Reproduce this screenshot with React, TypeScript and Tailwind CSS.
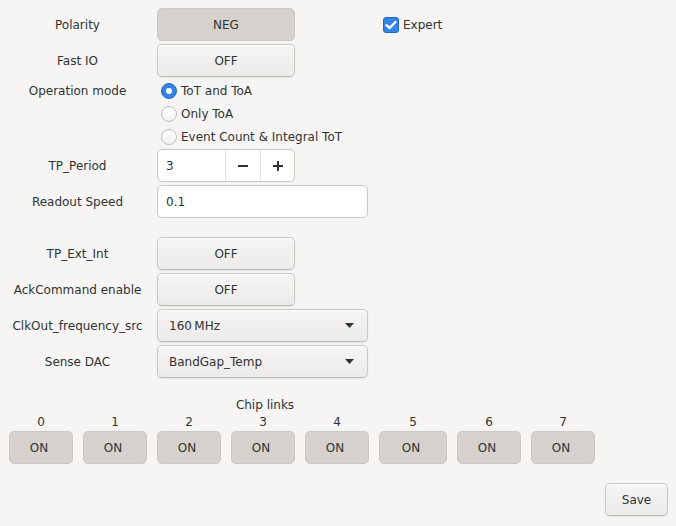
import React from "react";

const btn =
  "h-[33px] rounded-[5px] border border-[#cdc7c2] border-b-[#bfb8b1] bg-gradient-to-b from-[#f6f5f4] to-[#edebe9] shadow-[inset_0_1px_0_white,0_1px_2px_rgba(0,0,0,0.07)] flex items-center justify-center text-[#2e3436]";
const btnChecked =
  "h-[33px] rounded-[5px] border border-[#cdc7c2] bg-[#d6d1cd] flex items-center justify-center text-[#2e3436]";
const entry =
  "h-[33px] rounded-[5px] border border-[#cdc7c2] bg-white flex items-center text-[#2e3436]";

function Label({ children }: { children: React.ReactNode }) {
  return (
    <div className="w-[155px] shrink-0 text-center text-[#2e3436]">{children}</div>
  );
}

function Row({
  label,
  children,
}: {
  label: string;
  children: React.ReactNode;
}) {
  return (
    <div className="flex items-center h-[33px]">
      <Label>{label}</Label>
      <div className="ml-[2px] flex items-center">{children}</div>
    </div>
  );
}

function Radio({ checked, label }: { checked?: boolean; label: string }) {
  return (
    <div className="flex items-center h-[22px] pl-[4px]">
      {checked ? (
        <div className="w-[16px] h-[16px] rounded-full bg-[#3584e4] border border-[#1b6acb] flex items-center justify-center">
          <div className="w-[6px] h-[6px] rounded-full bg-white" />
        </div>
      ) : (
        <div className="w-[16px] h-[16px] rounded-full border border-[#c4bdb7] bg-gradient-to-b from-white to-[#f3f2f1]" />
      )}
      <span className="ml-[4px] text-[#2e3436]">{label}</span>
    </div>
  );
}

function Arrow() {
  return (
    <svg width="9" height="5" viewBox="0 0 9 5">
      <path d="M0 0 L9 0 L4.5 5 Z" fill="#2e3436" />
    </svg>
  );
}

export default function App() {
  const widths = [64, 64, 64, 64, 64, 68, 64, 64];
  return (
    <div
      className="w-[676px] h-[526px] bg-[#f6f5f4] text-[12px] leading-[14px] relative overflow-hidden"
      style={{ fontFamily: '"DejaVu Sans", sans-serif' }}
    >
      <div className="pt-[8px] flex flex-col">
        <div className="flex items-center h-[33px]">
          <Label>Polarity</Label>
          <div className={`ml-[2px] w-[138px] ${btnChecked}`}>NEG</div>
          <div className="ml-[88px] flex items-center">
            <div className="w-[16px] h-[16px] rounded-[3px] bg-[#3584e4] border border-[#1b6acb] flex items-center justify-center">
              <svg width="12" height="10" viewBox="0 0 12 10">
                <path
                  d="M1.5 5.2 L4.6 8 L10.5 2"
                  stroke="white"
                  strokeWidth="2.4"
                  fill="none"
                  strokeLinecap="round"
                  strokeLinejoin="round"
                />
              </svg>
            </div>
            <span className="ml-[4px] text-[#2e3436]">Expert</span>
          </div>
        </div>
        <div className="mt-[3px]">
          <Row label="Fast IO">
            <div className={`w-[138px] ${btn}`}>OFF</div>
          </Row>
        </div>
        <div className="mt-[3px] flex">
          <div className="h-[22px] flex items-center">
            <Label>Operation mode</Label>
          </div>
          <div className="ml-[2px] flex flex-col gap-[1px]">
            <Radio checked label="ToT and ToA" />
            <Radio label="Only ToA" />
            <Radio label="Event Count & Integral ToT" />
          </div>
        </div>
        <div className="mt-[1px]">
          <Row label="TP_Period">
            <div className={`w-[138px] ${entry} overflow-hidden`}>
              <div className="w-[67px] pl-[8px]">3</div>
              <div className="w-[35px] h-full border-l border-[#e5e1dd] flex items-center justify-center">
                <svg width="12" height="12" viewBox="0 0 12 12">
                  <rect x="1" y="5" width="10" height="2" fill="#2e3436" />
                </svg>
              </div>
              <div className="flex-1 h-full border-l border-[#e5e1dd] flex items-center justify-center">
                <svg width="12" height="12" viewBox="0 0 12 12">
                  <rect x="1" y="5" width="10" height="2" fill="#2e3436" />
                  <rect x="5" y="1" width="2" height="10" fill="#2e3436" />
                </svg>
              </div>
            </div>
          </Row>
        </div>
        <div className="mt-[3px]">
          <Row label="Readout Speed">
            <div className={`w-[211px] ${entry} pl-[8px]`}>0.1</div>
          </Row>
        </div>
        <div className="mt-[19px]">
          <Row label="TP_Ext_Int">
            <div className={`w-[138px] ${btn}`}>OFF</div>
          </Row>
        </div>
        <div className="mt-[3px]">
          <Row label="AckCommand enable">
            <div className={`w-[138px] ${btn}`}>OFF</div>
          </Row>
        </div>
        <div className="mt-[3px]">
          <Row label="ClkOut_frequency_src">
            <div className={`w-[211px] ${btn} !justify-between pl-[11px] pr-[13px]`}>
              <span>160{"\u2009"}MHz</span>
              <Arrow />
            </div>
          </Row>
        </div>
        <div className="mt-[3px]">
          <Row label="Sense DAC">
            <div className={`w-[211px] ${btn} !justify-between pl-[11px] pr-[13px]`}>
              <span>BandGap_Temp</span>
              <Arrow />
            </div>
          </Row>
        </div>
        <div className="mt-[19px] pl-[9px] grid grid-cols-[64px_64px_64px_64px_64px_68px_64px_64px] gap-x-[10px]">
          <div className="col-span-7 text-center h-[16px] leading-[16px] text-[#2e3436]">
            Chip links
          </div>
          <div />
          {widths.map((w, i) => (
            <div
              key={"n" + i}
              className="text-center h-[18px] leading-[18px] text-[#2e3436]"
            >
              {i}
            </div>
          ))}
          {widths.map((w, i) => (
            <div key={"b" + i} className={`${btnChecked} pr-[4px]`}>
              ON
            </div>
          ))}
        </div>
        <div className="mt-[19px] flex justify-end pr-[8px]">
          <div className={`w-[63px] ${btn}`}>Save</div>
        </div>
      </div>
    </div>
  );
}
